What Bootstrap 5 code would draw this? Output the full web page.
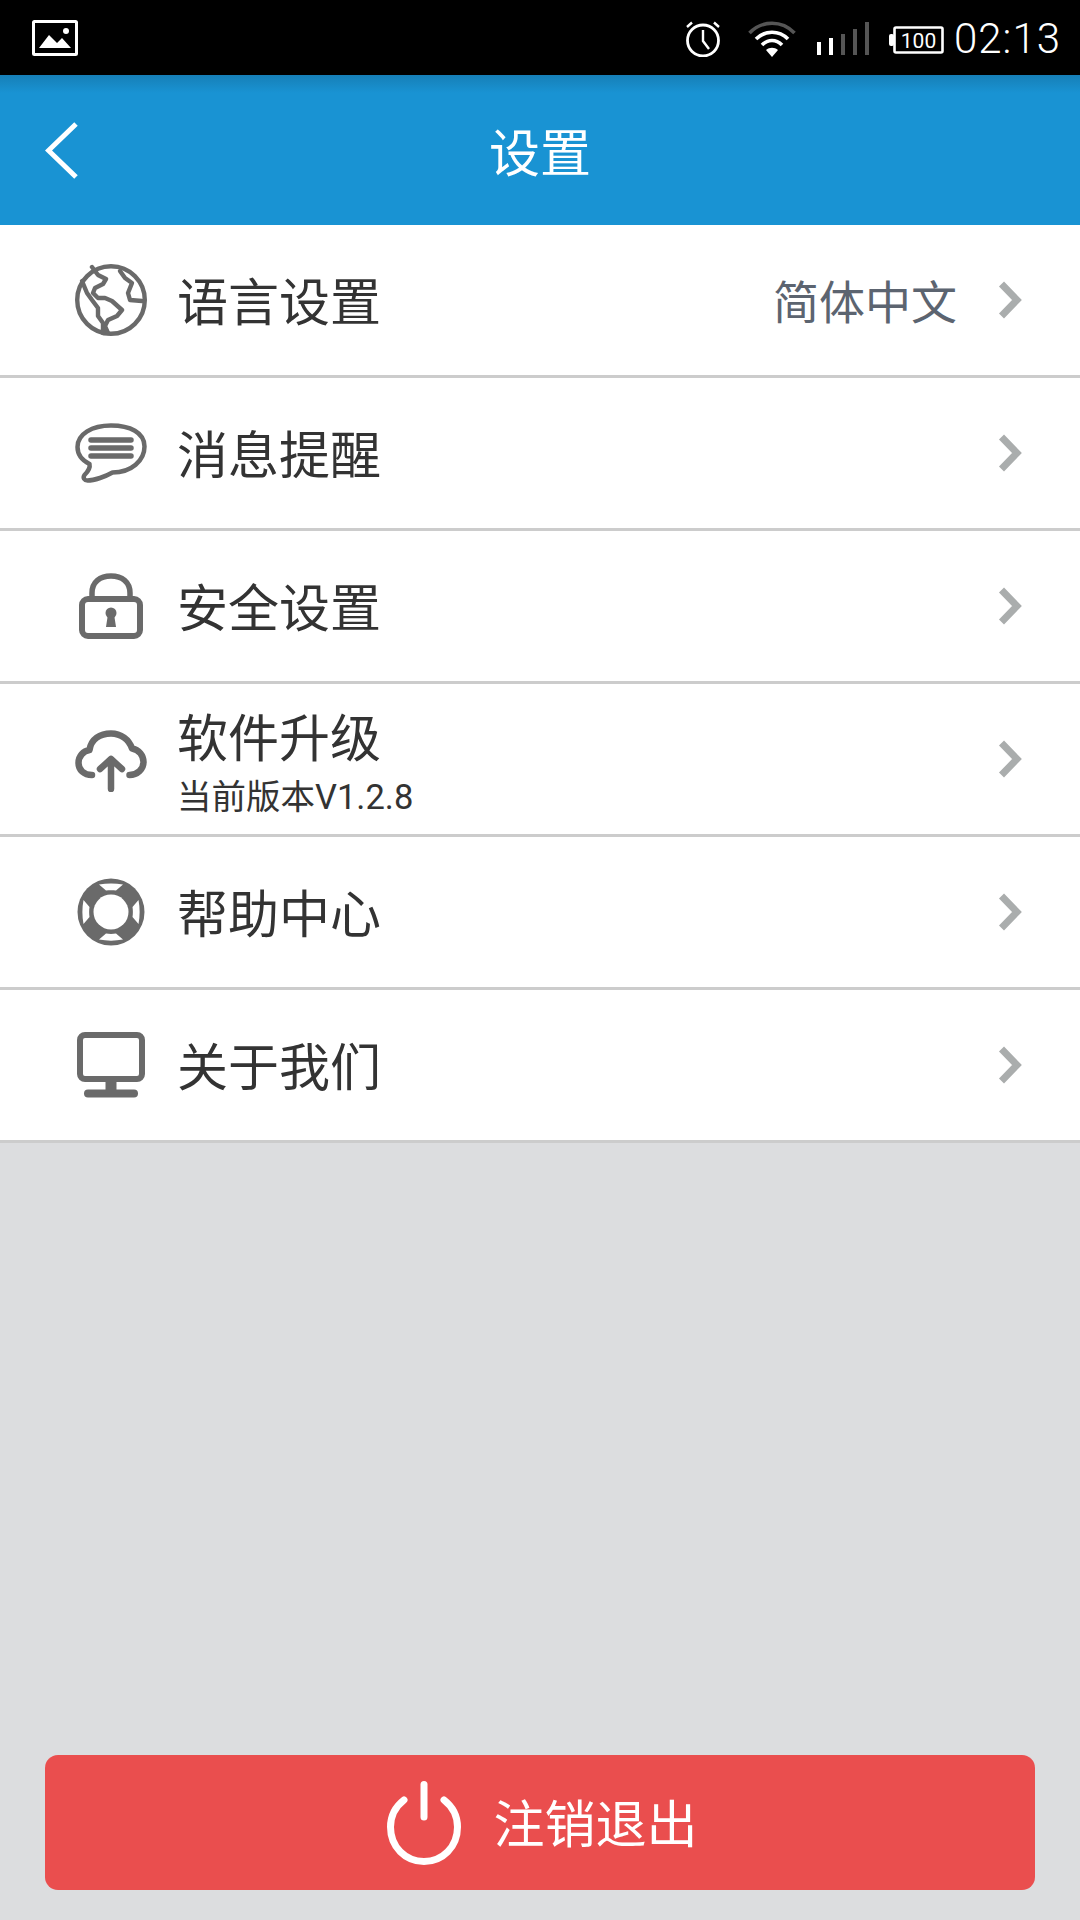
<!DOCTYPE html>
<html lang="zh">
<head>
<meta charset="utf-8">
<title>设置</title>
<link href="https://cdn.jsdelivr.net/npm/bootstrap@5.3.0/dist/css/bootstrap.min.css" rel="stylesheet">
<style>
html,body{margin:0;background:#dcdddf}
body{width:1080px;font-family:Roboto,"Noto Sans CJK SC",sans-serif;color:#333}
.screen{height:1920px}
.status-strip{height:75px;background:#000;color:#fff;padding:0 19px 0 32px}
.status-icons{height:75px}
.clock-text{font-family:Roboto,sans-serif;font-weight:300;font-size:42px;line-height:1;letter-spacing:1px;margin-left:10px;padding-top:3px}
.signal-bars{gap:8px;height:33px;margin:2px 20px 0 21px}
.signal-bars i{display:block;width:4px;background:#555}
.signal-bars i.on{background:#fff}
.batt-text{font-family:Roboto,sans-serif;font-size:21px;font-weight:400;fill:#fff}
.app-head{height:150px;background:linear-gradient(#167fb7 0,#1993d3 18px,#1993d3 100%);color:#fff;position:relative}
.app-title{font-size:51px;line-height:1;padding-top:8px}
.back-mark{position:absolute;left:45px;top:47px}
.menu-list{border-radius:0;--bs-list-group-border-width:0}
.menu-row{height:153px;padding:0 58px 0 75px!important;border:0;border-bottom:3px solid #ccc!important;background:#fff;color:#333;display:flex;align-items:center;border-radius:0!important}
.icon-slot{width:72px;height:72px;margin-right:30px;flex:none;display:flex;align-items:center;justify-content:center}
.row-label{font-size:51px;line-height:1;padding-top:7px;white-space:nowrap}
.row-stack{line-height:1}
.row-stack .row-label{padding-top:0;margin-top:11px}
.row-sub{font-size:34.500px;line-height:1;margin-top:15px;color:#333;white-space:nowrap}
.row-value{font-size:46px;line-height:1;color:#5c6470;margin-right:41px;padding-top:6px;white-space:nowrap}
.logout-wrap{padding:0 45px 30px}
.logout-btn{height:135px;width:100%;padding-left:17px;background:#ea4e4e;border:0;border-radius:13px;color:#fff;font-size:51px;line-height:1;gap:32px}
.logout-btn:hover{background:#ea4e4e;color:#fff}
.logout-btn span{padding-top:5px}
</style>
</head>
<body>
<div class="screen d-flex flex-column">
  <div class="status-strip d-flex align-items-center justify-content-between">
    <svg width="46" height="36" viewBox="0 0 46 36"><rect x="1.500" y="1.500" width="43" height="33" rx="1" fill="none" stroke="#fff" stroke-width="3"/><path d="M7 28 17 15l8 8 5-5 9 10z" fill="#fff"/><circle cx="34" cy="11" r="3" fill="#fff"/></svg>
    <div class="status-icons d-flex align-items-center">
      <svg width="38" height="36" viewBox="0 0 38 36" style="margin-top:2px"><circle cx="19" cy="19.500" r="15.500" fill="none" stroke="#fff" stroke-width="2.800"/><path d="M19 9v11l6 8" fill="none" stroke="#fff" stroke-width="2.400"/><path d="M3 6 8 1.500M35 6 30 1.500" stroke="#fff" stroke-width="2.400" fill="none"/></svg>
      <svg width="48" height="36" viewBox="0 0 48 36" style="margin:2px 0 0 26px"><path d="M1.500 12C14 -1 34 -1 46.500 12" fill="none" stroke="#555" stroke-width="3.600"/><path d="M8 18C17 9 31 9 40 18" fill="none" stroke="#fff" stroke-width="3.600"/><path d="M14 24C20 18 28 18 34 24" fill="none" stroke="#fff" stroke-width="3.600"/><path d="M18 29c3.500-3 8.500-3 12 0l-6 7z" fill="#fff"/></svg>
      <div class="signal-bars d-flex align-items-end"><i class="on" style="height:13px"></i><i class="on" style="height:17px"></i><i style="height:21px"></i><i style="height:26px"></i><i style="height:33px"></i></div>
      <svg width="55" height="28" viewBox="0 0 55 28" style="margin-top:4px"><rect x="0" y="8" width="5" height="12" rx="2" fill="#fff"/><rect x="5.500" y="1.500" width="48" height="25" rx="1.500" fill="none" stroke="#fff" stroke-width="2.600"/><text x="29.500" y="21.500" text-anchor="middle" class="batt-text">100</text></svg>
      <span class="clock-text">02:13</span>
    </div>
  </div>

  <div class="app-head d-flex align-items-center justify-content-center">
    <svg class="back-mark" width="33" height="57" viewBox="0 0 33 57"><path d="M31 2 3.500 28.500 31 55" fill="none" stroke="#fff" stroke-width="5"/></svg>
    <span class="app-title">设置</span>
  </div>

  <div class="list-group list-group-flush menu-list">
    <div class="list-group-item menu-row">
      <div class="icon-slot"><svg width="72" height="72" viewBox="0 0 72 72" fill="none" stroke="#6a6a6a" stroke-width="4.400" stroke-linejoin="round" stroke-linecap="round"><circle cx="36" cy="36" r="33.800" stroke-width="4.400"/><path d="M7 17 12 29l5 7 6 8v8l5 7v10"/><path d="M17 3l6 8 8 4-3 5-8 4-2 5 5 5h7l7 3 10 9-5 6-9 4-3 6 3 7"/><path d="M45 7l5 7 7 5-4 10 2 7 12 1"/></svg></div>
      <span class="row-label flex-grow-1">语言设置</span>
      <span class="row-value">简体中文</span>
      <svg width="24" height="38" viewBox="0 0 24 38"><path d="M3.500 3 19 19 3.500 35" fill="none" stroke="#aaadad" stroke-width="7"/></svg>
    </div>
    <div class="list-group-item menu-row">
      <div class="icon-slot"><svg width="72" height="60" viewBox="0 0 72 60" fill="none" stroke="#6a6a6a" stroke-linecap="round"><path d="M36 2.500C17 2.500 2.500 11 2.500 24c0 7 4 13 12 17 1 4-2 8-5 11-2 3 0 5.500 3 5.500 7 0 18-4 25-8 19 0 32-12 32-26S55 2.500 36 2.500z" stroke-width="4.500" stroke-linejoin="round"/><path d="M16 17H56M16 25H56M16 33H56" stroke-width="5.500"/></svg></div>
      <span class="row-label flex-grow-1">消息提醒</span>
      <svg width="24" height="38" viewBox="0 0 24 38"><path d="M3.500 3 19 19 3.500 35" fill="none" stroke="#aaadad" stroke-width="7"/></svg>
    </div>
    <div class="list-group-item menu-row">
      <div class="icon-slot"><svg width="64" height="66" viewBox="0 0 64 66" fill="none" stroke="#6a6a6a"><path d="M13 27V20C13 9 21 3 32 3s19 6 19 17v7" stroke-width="5.500"/><rect x="3" y="26" width="58" height="37" rx="6" stroke-width="6"/><circle cx="32" cy="40" r="5.500" fill="#6a6a6a" stroke="none"/><path d="M29 41h6l2 13H27z" fill="#6a6a6a" stroke="none"/></svg></div>
      <span class="row-label flex-grow-1">安全设置</span>
      <svg width="24" height="38" viewBox="0 0 24 38"><path d="M3.500 3 19 19 3.500 35" fill="none" stroke="#aaadad" stroke-width="7"/></svg>
    </div>
    <div class="list-group-item menu-row">
      <div class="icon-slot"><svg width="72" height="66" viewBox="0 -4 72 66" fill="none" stroke="#6a6a6a" stroke-width="6.500" stroke-linecap="round" stroke-linejoin="round"><path d="M17 45C9 45 3.500 40 3.500 33c0-7 5-12 11-13C16 9 25 3.500 36 3.500c10 0 18 6 21 15 7 1 11.500 7 11.500 13.500 0 7-6 13-14 13"/><path d="M36 59V30M25 39 36 29 47 39"/></svg></div>
      <div class="row-stack flex-grow-1"><div class="row-label">软件升级</div><div class="row-sub">当前版本V1.2.8</div></div>
      <svg width="24" height="38" viewBox="0 0 24 38"><path d="M3.500 3 19 19 3.500 35" fill="none" stroke="#aaadad" stroke-width="7"/></svg>
    </div>
    <div class="list-group-item menu-row">
      <div class="icon-slot"><svg width="68" height="68" viewBox="0 0 68 68"><circle cx="34" cy="34" r="33.500" fill="#6a6a6a"/><circle cx="34" cy="34" r="17.500" fill="#fff"/><path d="M22 6.500C30 5 38 5 46 6.500L39 12.500C36 12 32 12 29 12.500zM22 61.500C30 63 38 63 46 61.500L39 55.500C36 56 32 56 29 55.500zM6.500 22C5 30 5 38 6.500 46L12.500 39C12 36 12 32 12.500 29zM61.500 22C63 30 63 38 61.500 46L55.500 39C56 36 56 32 55.500 29z" fill="#fff"/></svg></div>
      <span class="row-label flex-grow-1">帮助中心</span>
      <svg width="24" height="38" viewBox="0 0 24 38"><path d="M3.500 3 19 19 3.500 35" fill="none" stroke="#aaadad" stroke-width="7"/></svg>
    </div>
    <div class="list-group-item menu-row">
      <div class="icon-slot"><svg width="68" height="66" viewBox="0 0 68 66" fill="none" stroke="#6a6a6a"><rect x="3" y="3" width="62" height="44" rx="5" stroke-width="6"/><path d="M34 46V60" stroke-width="11"/><path d="M11 61.500H57" stroke-width="8" stroke-linecap="round"/></svg></div>
      <span class="row-label flex-grow-1">关于我们</span>
      <svg width="24" height="38" viewBox="0 0 24 38"><path d="M3.500 3 19 19 3.500 35" fill="none" stroke="#aaadad" stroke-width="7"/></svg>
    </div>
  </div>

  <div class="logout-wrap mt-auto">
    <button type="button" class="btn logout-btn d-flex align-items-center justify-content-center">
      <svg width="74" height="84" viewBox="0 0 74 84" fill="none" stroke="#fff" stroke-linecap="round"><path d="M37 3.500V36" stroke-width="7"/><path d="M17 19C8 26 3.500 35 3.500 46c0 20 15 34.500 33.500 34.500S70.500 66 70.500 46c0-11-4.500-20-13.500-27" stroke-width="7"/></svg>
      <span>注销退出</span>
    </button>
  </div>
</div>
<script src="https://cdn.jsdelivr.net/npm/bootstrap@5.3.0/dist/js/bootstrap.bundle.min.js"></script>
</body>
</html>
